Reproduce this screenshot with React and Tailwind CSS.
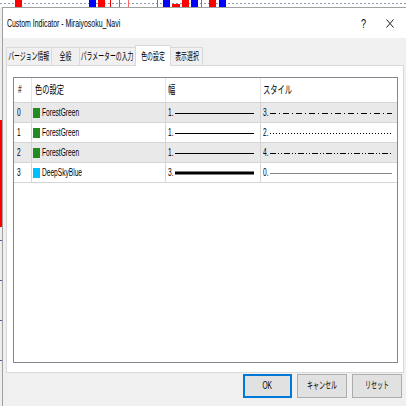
import React from "react";

// condensed UI text (the dialog font is narrow)
const T = ({ children, className = "" }) => (
  <span className={"inline-block origin-left scale-x-[0.66] whitespace-nowrap " + className}>{children}</span>
);

const TC = ({ children, className = "" }) => (
  <span className={"inline-block origin-center whitespace-nowrap " + className}>{children}</span>
);

const rows = [
  { n: "0", color: "#228b22", name: "ForestGreen", w: 1, s: 3, dash: "6 3 1 3" },
  { n: "1", color: "#228b22", name: "ForestGreen", w: 1, s: 2, dash: "1 2" },
  { n: "2", color: "#228b22", name: "ForestGreen", w: 1, s: 4, dash: "6 2 1 2 1 2" },
  { n: "3", color: "#00bfff", name: "DeepSkyBlue", w: 3, s: 0, dash: null },
];

const tabs = [
  { label: "バージョン情報", w: "w-[46px]" },
  { label: "全般", w: "w-[29px]" },
  { label: "パラメーターの入力", w: "w-[57px]" },
  { label: "色の設定", w: "w-[36px]", active: true },
  { label: "表示選択", w: "w-[33px]" },
];

function ChartStrip() {
  const candles = [
    [15, 7, "#f00", 0], [89, 7, "#00f", 0], [98, 7, "#f00", 0], [163, 7, "#00f", 0],
    [172, 8, "#f00", 4], [182, 7, "#f00", 0], [191, 7, "#00f", 0], [209, 7, "#f00", 0], [219, 7, "#00f", 0],
  ];
  const wicks = [[110, "#f00"], [119, "#66f"], [128, "#f66"], [157, "#66f"], [201, "#66f"]];
  return (
    <svg width="406" height="7" className="block shrink-0">
      <rect width="406" height="7" fill="#fff" />
      <line x1="0" y1="3.5" x2="406" y2="3.5" stroke="#8c9ab8" strokeDasharray="2 2" />
      {wicks.map(([x, c]) => (
        <rect key={x} x={x} y="0" width="1" height="7" fill={c} />
      ))}
      {candles.map(([x, w, c, y]) => (
        <rect key={x} x={x} y={y} width={w} height={7 - y} fill={c} />
      ))}
    </svg>
  );
}

function LeftStrip() {
  return (
    <svg width="2" height="399" className="block shrink-0">
      <rect width="2" height="399" fill="#eeeeee" />
      <rect x="0" y="113" width="2" height="107" fill="#f00" />
      {[233, 273, 313, 353].map((y) => (
        <rect key={y} x="0" y={y} width="2" height="1" fill="#5a5a9a" />
      ))}
    </svg>
  );
}

export default function App() {
  return (
    <div className="w-[406px] h-[406px] overflow-hidden bg-white flex flex-col text-[10px] leading-none text-black font-['Liberation_Sans','Noto_Sans_CJK_JP',sans-serif]">
      <ChartStrip />
      <div className="flex flex-1">
        <LeftStrip />
        {/* Dialog */}
        <div className="w-[410px] shrink-0 flex flex-col border-l border-t border-[#a0a0a0] bg-[#f0f0f0]">
          {/* Title bar */}
          <div className="h-[30px] bg-white flex items-center pl-[4px] pr-[9px]">
            <div className="flex-1">
              <T className="text-[10.5px]">Custom Indicator - Miraiyosoku_Navi</T>
            </div>
            <div className="w-[26px] flex justify-center">
              <TC className="text-[13px] scale-x-[0.7]">?</TC>
            </div>
            <div className="w-[26px] flex justify-center">
              <svg width="8" height="9">
                <path d="M0.5 0.5 L7.5 8.5 M7.5 0.5 L0.5 8.5" stroke="#222" strokeWidth="1" fill="none" />
              </svg>
            </div>
          </div>

          {/* Body */}
          <div className="flex-1 flex flex-col pt-[7px]">
            {/* Tabs */}
            <div className="flex items-end h-[20px] pl-[4px] relative z-10">
              {tabs.map((t) => (
                <div
                  key={t.label}
                  className={
                    t.active
                      ? `${t.w} h-[21px] -mb-px -ml-px bg-white border border-b-0 border-[#d9d9d9] flex items-center justify-center`
                      : `${t.w} h-[18px] -ml-px bg-[#f0f0f0] border border-b-0 border-[#d9d9d9] flex items-center justify-center`
                  }
                >
                  <TC className="text-[10.5px] scale-x-[0.56]">{t.label}</TC>
                </div>
              ))}
            </div>

            {/* Tab panel */}
            <div className="ml-[3px] w-[398px] h-[308px] bg-white border border-[#d9d9d9] pl-[6px] pt-[11px]">
              {/* List view */}
              <div className="w-[385px] h-[286px] border border-[#828790] flex flex-col bg-white">
                {/* Header */}
                <div className="h-[25px] flex border-b border-[#d5d5d5]">
                  <div className="w-[18px] border-r border-[#e5e5e5] flex items-center pl-[4px]">
                    <T>#</T>
                  </div>
                  <div className="w-[134px] border-r border-[#e5e5e5] flex items-center pl-[3px]">
                    <T className="text-[11px]">色の設定</T>
                  </div>
                  <div className="w-[95px] border-r border-[#e5e5e5] flex items-center pl-[2px]">
                    <T className="text-[11px]">幅</T>
                  </div>
                  <div className="flex-1 flex items-center pl-[2px]">
                    <T className="text-[11px] scale-x-[0.6]">スタイル</T>
                  </div>
                </div>

                {rows.map((r, i) => (
                  <div
                    key={r.n}
                    className={
                      i % 2 === 0
                        ? "h-[20px] flex border-b border-[#d5d5d5] bg-[#e9e9e9]"
                        : "h-[20px] flex border-b border-[#d5d5d5] bg-white"
                    }
                  >
                    <div className="w-[18px] border-r border-[#d5d5d5] flex items-center pl-[3px]">
                      <T>{r.n}</T>
                    </div>
                    <div className="w-[134px] border-r border-[#d5d5d5] flex items-center pl-[1px]">
                      <div className="w-[7px] h-[10px] mr-[2px]" style={{ backgroundColor: r.color }} />
                      <T>{r.name}</T>
                    </div>
                    <div className="w-[95px] border-r border-[#d5d5d5] flex items-center pl-[2px]">
                      <div className="w-[7px]">
                        <T>{r.w}.</T>
                      </div>
                      <svg width="79" height="6" className="block">
                        <line
                          x1="0"
                          y1={r.w === 3 ? 3 : 3.5}
                          x2="79"
                          y2={r.w === 3 ? 3 : 3.5}
                          stroke="#000"
                          strokeWidth={r.w === 3 ? 3 : 1}
                        />
                      </svg>
                    </div>
                    <div className="flex-1 flex items-center pl-[2px]">
                      <div className="w-[7px]">
                        <T>{r.s}.</T>
                      </div>
                      <svg width="122" height="6" className="block">
                        <line
                          x1="0"
                          y1="3.5"
                          x2="122"
                          y2="3.5"
                          stroke={r.dash ? "#000" : "#888"}
                          strokeWidth="1"
                          strokeDasharray={r.dash || undefined}
                        />
                      </svg>
                    </div>
                  </div>
                ))}
              </div>
            </div>

            {/* Buttons */}
            <div className="flex gap-[5px] pl-[240px] mt-[1px]">
              <div className="w-[49px] h-[24px] bg-[#e1e1e1] border-2 border-[#0078d7] flex items-center justify-center">
                <TC className="scale-x-[0.66]">OK</TC>
              </div>
              <div className="w-[50px] h-[24px] bg-[#e1e1e1] border border-[#adadad] flex items-center justify-center">
                <TC className="scale-x-[0.6]">キャンセル</TC>
              </div>
              <div className="w-[50px] h-[24px] bg-[#e1e1e1] border border-[#adadad] flex items-center justify-center">
                <TC className="scale-x-[0.6]">リセット</TC>
              </div>
            </div>
          </div>
        </div>
      </div>
    </div>
  );
}
